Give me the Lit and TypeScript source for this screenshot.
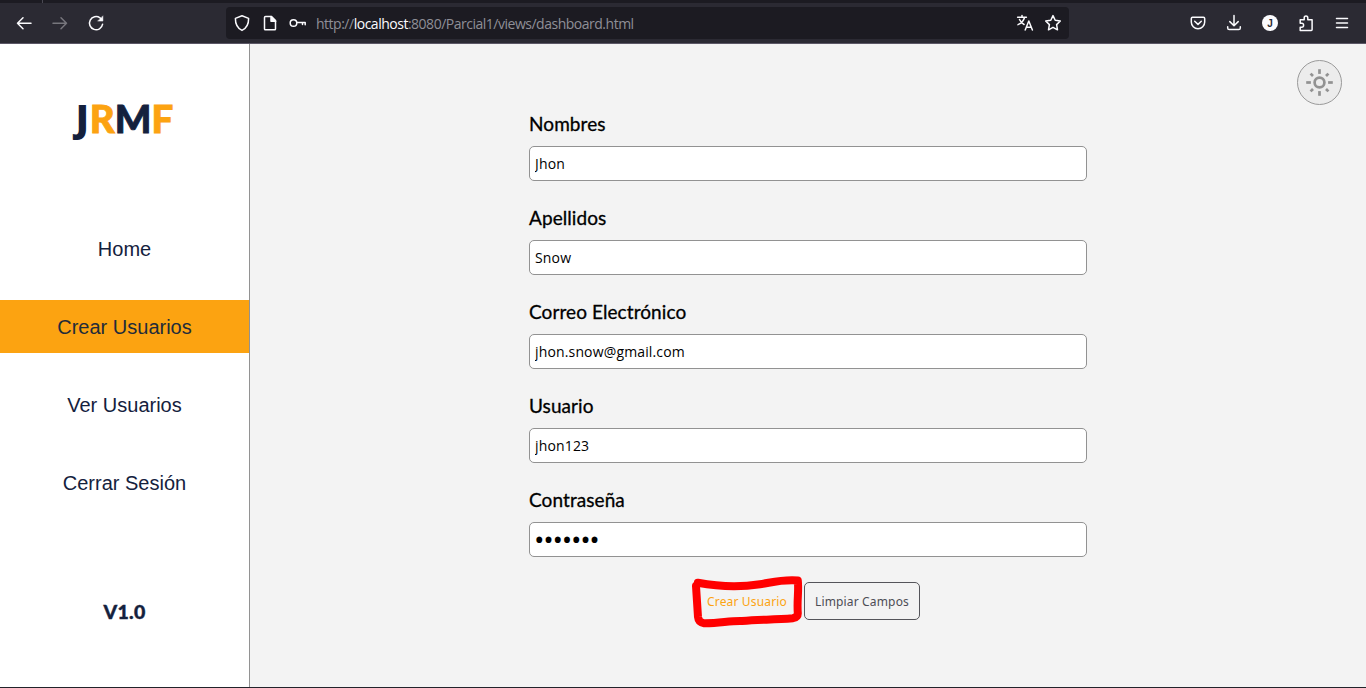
import { LitElement, html, svg, css } from "lit";
import { customElement } from "lit/decorators.js";

@customElement("browser-bar")
class BrowserBar extends LitElement {
  static styles = css`
    :host { display: block; flex: none; height: 44px; box-sizing: border-box; background: #2b2a33; border-bottom: 1px solid #5b5766; }
    .tabs { height: 3px; background: #1c1b22; }
    .tab { width: 42px; height: 3px; border-right: 1px solid #4a4953; }
    .bar { display: flex; height: 40px; align-items: center; box-sizing: border-box; padding: 0 14px 0 14px; color: #fbfbfe; }
    svg { display: block; flex: none; width: 20px; height: 20px; fill: none; stroke: currentColor; stroke-width: 1.5; stroke-linecap: round; stroke-linejoin: round; }
    .nav { display: flex; gap: 16px; width: 212px; }
    .off { color: #77767d; }
    .url { display: flex; align-items: center; width: 843px; height: 32px; box-sizing: border-box; padding: 0 6px; background: #1c1b22; border-radius: 4px; }
    .left { display: flex; gap: 8px; width: 84px; }
    .addr { flex: 1; padding-top: 2px; color: #8f8f97; font: 14px/20px "Open Sans", sans-serif; letter-spacing: -0.49px; white-space: nowrap; }
    .addr b { font-weight: 400; color: #fbfbfe; }
    .right { display: flex; gap: 8px; }
    .tools { display: flex; flex: 1; justify-content: flex-end; gap: 16px; }
    .solid { fill: currentColor; stroke: none; }
    .j { font: bold 10px "Liberation Sans", sans-serif; fill: #2b2a33; stroke: none; }
  `;
  render() {
    return html`<div class="tabs"><div class="tab"></div></div>
    <div class="bar">
      <div class="nav">
        <svg viewBox="0 0 20 20"><path d="M17 10.2H3.5M9 4.7 3.5 10.2 9 15.7" /></svg>
        <svg class="off" viewBox="0 0 20 20"><path d="M3 10.2h13.5M11 4.7l5.5 5.5-5.5 5.5" /></svg>
        <svg viewBox="0 0 20 20"><path d="M16.6 11.2A6.6 6.6 0 1 1 14 4.8l2 1.9" /><path d="M16.9 3.2v4.9H12z" fill="currentColor" stroke-width=".5" /></svg>
      </div>
      <div class="url">
        <div class="left">
          <svg viewBox="0 0 20 20"><path d="M10 2.8 16.6 5.4C16.7 10.8 15 14.8 10 17.4 5 14.8 3.3 10.8 3.4 5.4z" /></svg>
          <svg viewBox="0 0 20 20"><path d="M5.5 3.6h6l4 4v8.3q0 .8-.8.8H5.3q-.8 0-.8-.8V4.4q0-.8 1-.8z" /><path d="M11 3.5v4.7h4.7z" fill="currentColor" /></svg>
          <svg viewBox="0 0 20 20"><circle cx="5.5" cy="10" r="3.3" /><path d="M9.2 9.6h8v2.2M14.5 9.6v2" /></svg>
        </div>
        <div class="addr">http://<b>localhost</b>:8080/Parcial1/views/dashboard.html</div>
        <div class="right">
          <svg viewBox="0 0 20 20"><path d="M2.6 4.2h8.8M7 2.5v1.7M9.5 4.5C8.6 8 6 10.4 3 11.6M4.5 6.5c1 2.2 2.6 4 4.6 5M10.2 17l3.6-9 3.6 9M11.4 14.3h4.8" /></svg>
          <svg viewBox="0 0 20 20"><path d="m10 2.6 2.2 4.7 5.1.7-3.7 3.6.9 5.2-4.5-2.5-4.5 2.5.9-5.2L2.7 8l5.1-.7z" /></svg>
        </div>
      </div>
      <div class="tools">
        <svg viewBox="0 0 20 20"><path d="M4.5 4.2h11q1.2 0 1.2 1.2V9a6.7 6.7 0 0 1-13.4 0V5.4q0-1.2 1.2-1.2zM6.7 8.3 10 11.4l3.3-3.1" /></svg>
        <svg viewBox="0 0 20 20"><path d="M10 2.5v10M5.8 8.6 10 12.7l4.2-4.1M3.7 13.7v1.2q0 1.6 1.6 1.6h9.4q1.6 0 1.6-1.6v-1.2" /></svg>
        <svg viewBox="0 0 20 20"><circle class="solid" cx="10" cy="10" r="8" /><text class="j" x="7.2" y="13.6">J</text></svg>
        <svg viewBox="0 0 20 20"><path d="M4.2 9.5V6.7h4V4.9q0-1.9 1.8-1.9t1.8 1.9v1.8h4.3v9.9q0 .8-.8.8H4.2v-3.2h1.5q1.9 0 1.9-2t-1.9-1.9H4.2z" /></svg>
        <svg viewBox="0 0 20 20"><path d="M4.5 5.5h11M4.5 10h11M4.5 14.5h11" /></svg>
      </div>
    </div>`;
  }
}

@customElement("side-menu")
class SideMenu extends LitElement {
  static styles = css`
    :host { display: flex; flex-direction: column; flex: none; width: 250px; box-sizing: border-box; background: #fff; border-right: 1px solid #929292; color: #14213d; }
    .logo { display: flex; justify-content: center; height: 178px; box-sizing: border-box; padding: 49px 0 0 0; font: 900 38.5px/50px Lato, sans-serif; -webkit-text-stroke: 0.9px currentColor; }
    .j { font: 800 37px/49px "Open Sans", sans-serif; padding-right: 1px; -webkit-text-stroke: 0; }
    .r { color: #fca311; }
    nav { display: flex; flex-direction: column; gap: 25px; }
    .item { height: 53px; font: 20px/54px "Liberation Sans", Arial, sans-serif; text-align: center; }
    .on { background: #fca311; color: #222b3a; }
    .version { padding-top: 90px; text-align: center; font: 900 19.5px/26px Lato, sans-serif; letter-spacing: 0.3px; -webkit-text-stroke: 0.4px currentColor; }
  `;
  render() {
    return html`
      <div class="logo"><span class="j">J</span><span class="r">R</span><span>M</span><span class="r">F</span></div>
      <nav>
        <div class="item">Home</div>
        <div class="item on">Crear Usuarios</div>
        <div class="item">Ver Usuarios</div>
        <div class="item">Cerrar Sesión</div>
      </nav>
      <div class="version">V1.0</div>`;
  }
}

const FIELDS = [
  { label: "Nombres", value: "Jhon", type: "text" },
  { label: "Apellidos", value: "Snow", type: "text" },
  { label: "Correo Electrónico", value: "jhon.snow@gmail.com", type: "text" },
  { label: "Usuario", value: "jhon123", type: "text" },
  { label: "Contraseña", value: "snow123", type: "password" },
];

@customElement("user-form")
class UserForm extends LitElement {
  static styles = css`
    :host { display: block; width: 558px; }
    .field { display: block; height: 94px; }
    .label { display: block; height: 33px; font: 400 19px/22px Lato, sans-serif; letter-spacing: 0.08px; color: #000; -webkit-text-stroke: 0.3px #000; }
    input { display: block; width: 100%; height: 35px; box-sizing: border-box; margin: 0; padding: 0 5px; border: 1px solid #929292; border-radius: 5px; background: #fff; color: #000; font: 14px "Open Sans", sans-serif; letter-spacing: 0.15px; outline: none; }
    input[type="password"] { font-size: 28px; letter-spacing: -1.3px; padding: 0 4px 1px; }
    .actions { display: flex; justify-content: center; gap: 3px; margin-top: -1px; }
    button { position: relative; height: 38px; margin: 0; padding: 0; box-sizing: border-box; border: 1px solid #55555a; border-radius: 5px; background: #f3f3f3; color: #4d4d55; font: 12px "Noto Sans", sans-serif; letter-spacing: 0.15px; }
    .create { width: 105px; border-color: transparent; color: #fca311; padding-right: 3px; }
    .clear { width: 116px; }
    .mark { position: absolute; left: -7px; top: -8px; width: 116px; height: 54px; fill: none; stroke: #f00; stroke-width: 8; stroke-linecap: round; stroke-linejoin: round; overflow: visible; }
  `;
  render() {
    return html`
      ${FIELDS.map((f) => html`<label class="field"><span class="label">${f.label}</span><input type=${f.type} .value=${f.value} /></label>`)}
      <div class="actions">
        <button class="create">Crear Usuario
          <svg class="mark" viewBox="0 0 116 54"><path d="M6 11 8 42Q8.5 47.6 14 48.2C30 48.4 39 45.6 52 46 70 44.5 82 44.8 103 43.2Q108 42 107.8 38C106.8 25 109 16 107.8 5.5 91 4.3 82 7.5 70 9.3 50 12.3 28 11.5 7.8 7.8" /></svg>
        </button>
        <button class="clear">Limpiar Campos</button>
      </div>`;
  }
}

@customElement("app-root")
class AppRoot extends LitElement {
  static styles = css`
    :host { display: flex; flex-direction: column; height: 688px; box-sizing: border-box; border-bottom: 1px solid #22232a; background: #f3f3f3; overflow: hidden; }
    .body { display: flex; flex: 1; min-height: 0; }
    main { position: relative; display: flex; justify-content: center; flex: 1; padding-top: 69px; }
    .theme { position: absolute; right: 24px; top: 16px; display: grid; place-items: center; width: 45px; height: 45px; box-sizing: border-box; border: 1px solid #9a9a9a; border-radius: 50%; background: #ececec; }
    .theme svg { width: 27px; height: 27px; fill: none; stroke: #929292; stroke-width: 2.7; }
  `;
  render() {
    const rays = [0, 45, 90, 135, 180, 225, 270, 315];
    return html`
      <browser-bar></browser-bar>
      <div class="body">
        <side-menu></side-menu>
        <main>
          <user-form></user-form>
          <div class="theme"><svg viewBox="0 0 27 27"><circle cx="13.5" cy="13.5" r="4.9" />${rays.map((a) => svg`<path d=${a % 90 ? "M13.5 4.3V.9" : "M13.5 4.9V.2"} transform="rotate(${a} 13.5 13.5)" />`)}</svg></div>
        </main>
      </div>`;
  }
}
